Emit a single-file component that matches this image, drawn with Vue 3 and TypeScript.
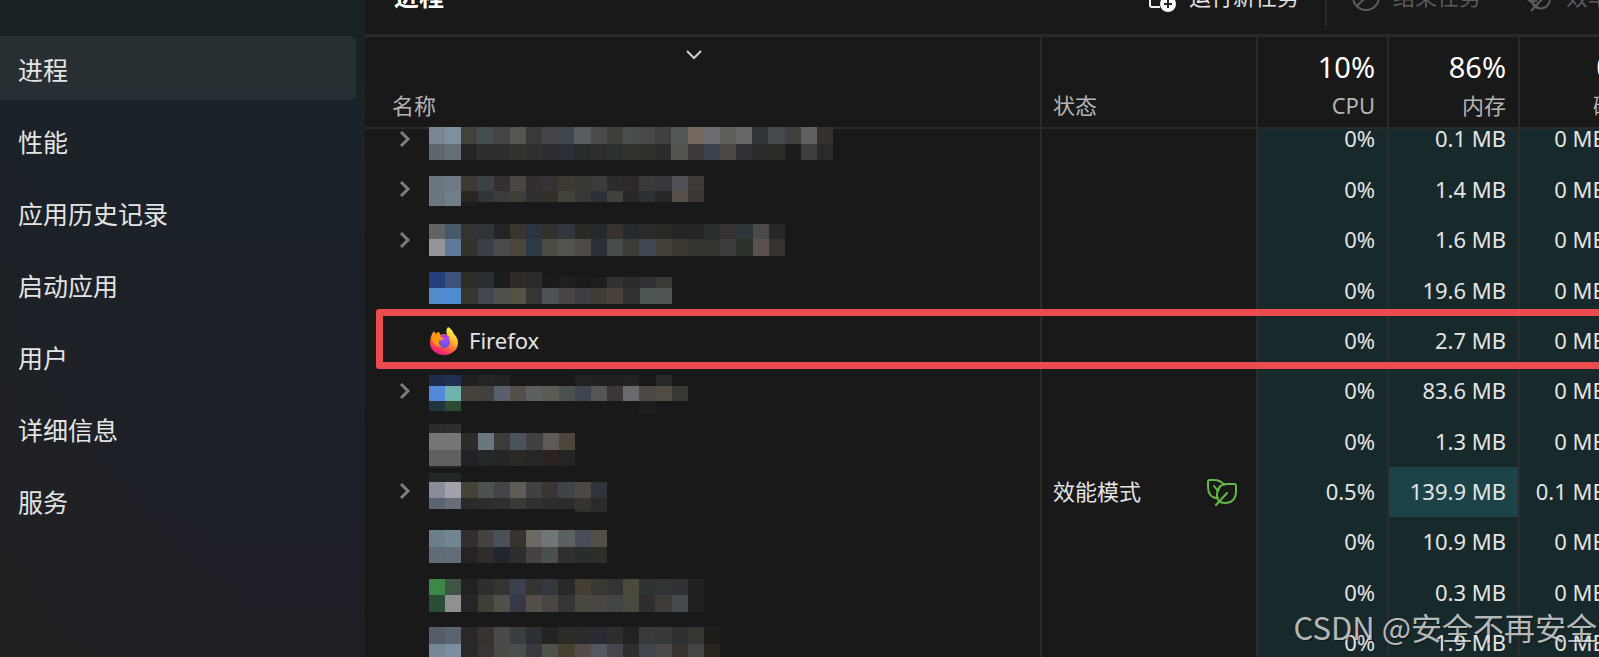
<script setup lang="ts">
interface Tile {
  x: number
  y: number
  h: number
  fill: string
}

interface Process {
  name?: string
  expandable?: boolean
  efficiency?: boolean
  cpu: string
  memory: string
  disk: string
  busy?: boolean
  marked?: boolean
  columns: number
  tiles: Tile[]
}

const TILE = 97

// One horizontal strip of tiles; "-" leaves a tile empty.
function band(y: number, end: number, colors: string, start = 0): Tile[] {
  return colors
    .split(' ')
    .map((c, i) => ({ x: (start + i) * TILE, y, h: end - y, fill: c }))
    .filter((t) => t.fill !== '-')
    .map((t) => ({ ...t, fill: '#' + t.fill }))
}

const navItems: string[] = ['进程', '性能', '应用历史记录', '启动应用', '用户', '详细信息', '服务']

const processes: Process[] = [
  {
    expandable: true, cpu: '0%', memory: '0.1 MB', disk: '0 MB/秒', columns: 25,
    tiles: [
      ...band(12, 29, '7a8792 7f8f9b 44423d 454d4f 444444 57554f 3a3839 434546 3f474c 575c60 4d4b49 403f3c 4a4f4d 484846 413f41 505754 73675f 6b6c70 5e5f5b 666764 2f3437 454a4e 40413d 616162 352f2e'),
      ...band(29, 45, '60666e 666f77 262523 2d2e2f 2e2e2d 34322d 303031 2d2e30 2b3036 292c2c 2d2d2c 2b3130 33312c 31302d 2c2c2e 52544e 3e383b 3c434f 4c4743 303136 292a2c 2e2c29 1c1d1e 3f3d40 2a2a2b'),
    ],
  },
  {
    expandable: true, cpu: '0%', memory: '1.4 MB', disk: '0 MB/秒', columns: 17,
    tiles: [
      ...band(11, 26, '6b767e 6e7983 3c3935 3c4146 323130 4b4643 332f2e 353233 3d3832 383734 3c3c3f 2e2c2a 2c2928 39393b 36373a 505156 3e3b36'),
      ...band(26, 37, '6b767e 727e89 292621 30353a 3b3b3d 3f3e37 303033 352f2a 43433c 363836 2e3038 40423c 282626 2b3135 262624 57504b 3b3633'),
      ...band(37, 41, '6b767e 727e89 1e1d1b'),
    ],
  },
  {
    expandable: true, cpu: '0%', memory: '1.6 MB', disk: '0 MB/秒', columns: 22,
    tiles: [
      ...band(8, 23, '626463 485866 34332f 2f3438 242424 38342e 2b3540 33312e 33373d 2b2926 25282c 37312f 272a2d 2b2b2b 292824 242523 242625 2b2e2f 363232 2f363a 4c4a48 292725'),
      ...band(23, 40, '959595 5e7b99 33322d 3c3f45 494a49 49473c 2e3946 4b4b44 53534f 4d4945 2b3036 474b49 3c3b37 414854 434038 3a3630 34332e 33342f 3d3c3a 2d312c 5b5250 373230'),
    ],
  },
  {
    cpu: '0%', memory: '19.6 MB', disk: '0 MB/秒', columns: 15,
    tiles: [
      ...band(6, 22, '263e7c 3d5379 2d2e2a 2a2f31 1b1c1c 302b28 292a2b'),
      ...band(11, 22, '1b1b1b 202021 1b1b1b 1d1e1f 333231 2d2b2a 303136 3b3934', 7),
      ...band(22, 38, '558acb 4f8dd3 37362f 43474d 50504f 555145 353532 4d5357 4a4344 3f3e43 403e34 48423a 333233 4c5755 525354'),
    ],
  },
  { name: 'Firefox', cpu: '0%', memory: '2.7 MB', disk: '0 MB/秒', marked: true, columns: 0, tiles: [] },
  {
    expandable: true, cpu: '0%', memory: '83.6 MB', disk: '0 MB/秒', columns: 16,
    tiles: [
      ...band(8, 19, '202c4d 222f50 202020 252525 232323 - - - - 222222 212121 22211f 222321 - 282828'),
      ...band(19, 34, '5488d8 70b3ad 46413b 41413f 59606c 544f4b 5d6061 5b5a53 4c5150 3e454f 555556 3b363a 686a6e 4d4746 4f4c43 393832'),
      ...band(34, 44, '223342 2b4a2f'),
      ...band(34, 46, '1d1d1d', 13),
    ],
  },
  {
    cpu: '0%', memory: '1.3 MB', disk: '0 MB/秒', columns: 9,
    tiles: [
      ...band(7, 16, '2c2c2c 2e2e2e'),
      ...band(16, 33, '757575 757575 2c2a2b 6a777f 3c3a3b 4c525c 41423f 5e5b57 4c463d'),
      ...band(33, 49, '606060 606060 202225 242727 252525 292926 252625 2a2320 242424'),
      ...band(49, 51, '242726 242726'),
    ],
  },
  {
    expandable: true, efficiency: true, cpu: '0.5%', memory: '139.9 MB', disk: '0.1 MB/秒', busy: true, columns: 11,
    tiles: [
      ...band(6, 15, '242828 242828'),
      ...band(15, 31, '898b98 a4a1ac 454237 4b5250 434447 5e5c55 414144 3a3433 404348 4d4846 30333a'),
      ...band(31, 42, '5c6371 696d79 2a2a28 2c2d2e 2f2f31 3a3937 312f2f 2d2d2c 2b2c2b 353431 292a2a'),
      ...band(42, 45, '31302f 292a2a', 9),
    ],
  },
  {
    cpu: '0%', memory: '10.9 MB', disk: '0 MB/秒', columns: 11,
    tiles: [
      ...band(12, 29, '6d7e8b 718593 332e2d 474242 4b5058 393330 6c6965 707577 5b6060 494d59 524f46'),
      ...band(29, 45, '606b76 626d78 252422 302c2b 22252b 2e2e2d 474142 495050 302e30 2a2d2d 2e2d28'),
    ],
  },
  {
    cpu: '0%', memory: '0.3 MB', disk: '0 MB/秒', columns: 17,
    tiles: [
      ...band(11, 27, '3c8849 405445 222222 2f2e2c 353431 3a414c 343330 34373b 282827 453e33 3a3832 343331 4b483c 2f3432 303432 303135 22211f'),
      ...band(27, 44, '2a4d35 909090 262626 3f3e37 50504a 373a46 544f48 4a4545 353633 474840 494643 414644 494940 2e2e2f 3e3a38 444a4d 22211f'),
    ],
  },
  {
    cpu: '0%', memory: '1.9 MB', disk: '0 MB/秒', columns: 18,
    tiles: [
      ...band(9, 26, '555e68 5a646e 292827 383230 484a47 3a3d3f 2d3033 242321 2c2b28 292a2b 2a2b32 2e2e31 222222 393a3b 37383a 2e2f30 353532 1e1c19'),
      ...band(26, 43, '768895 7c8fa0 292827 383433 484a46 484d4e 383a40 50504b 45402f 534c48 54585f 47454c 2e2e2e 42444c 494846 38322e 434444 29241e'),
    ],
  },
]
</script>

<template>
  <div class="window">
    <nav class="sidebar">
      <button v-for="(item, i) in navItems" :key="item" type="button" class="nav-item" :class="{ active: i === 0 }">
        {{ item }}
      </button>
    </nav>

    <main class="main">
      <header class="toolbar">
        <h1>进程</h1>
        <button type="button" class="tool">
          <svg width="30" height="30" viewBox="0 0 30 30" fill="none">
            <path d="M25 10V2H3v20q0 2 2 2h8" stroke="#f0f0f0" stroke-width="2" />
            <circle cx="21" cy="21" r="8" fill="#f7f7f7" />
            <path d="M21 17v8M17 21h8" stroke="#222" stroke-width="2" />
          </svg>
          <span>运行新任务</span>
        </button>
        <i class="divider"></i>
        <button type="button" class="tool" disabled>
          <svg width="30" height="30" viewBox="0 0 30 30" fill="none" stroke="currentColor" stroke-width="2">
            <circle cx="15" cy="14" r="13" />
            <path d="M6 23 24 5" />
          </svg>
          <span>结束任务</span>
        </button>
        <button type="button" class="tool last" disabled>
          <svg width="30" height="30" viewBox="0 0 30 30" fill="none" stroke="currentColor" stroke-width="2">
            <path d="M11 24q5 3 11 0c4-3 5-8 5-16M11 24c-4-4-3-10 3-15h13" />
            <path d="M7 28 20 14M13 18Q4 19 2 13V2M2 15l14 11" />
          </svg>
          <span>效率模式</span>
        </button>
      </header>

      <table>
        <colgroup>
          <col />
          <col class="col-status" />
          <col class="col-num" />
          <col class="col-num" />
          <col class="col-num" />
        </colgroup>
        <thead>
          <tr>
            <th scope="col" class="name-head">
              <svg width="16" height="10" viewBox="0 0 16 10" fill="none" stroke="#d0d0d0" stroke-width="2">
                <path d="m1 1 7 7 7-7" />
              </svg>
              <span>名称</span>
            </th>
            <th scope="col">状态</th>
            <th scope="col" class="num"><b>10%</b>CPU</th>
            <th scope="col" class="num"><b>86%</b>内存</th>
            <th scope="col" class="num"><b>0%</b>磁盘</th>
          </tr>
        </thead>
        <tbody>
          <tr v-for="(p, i) in processes" :key="i" :class="{ marked: p.marked }">
            <td class="name">
              <div class="name-inner">
                <button v-if="p.expandable" type="button" class="expand" aria-label="展开">
                  <svg width="12" height="18" viewBox="0 0 12 18" fill="none" stroke="#7c7c7c" stroke-width="3">
                    <path d="m2 1 7 7-7 7" />
                  </svg>
                </button>
                <span v-else class="expand"></span>
                <svg
                  v-if="p.columns"
                  class="mosaic"
                  :width="Math.round((p.columns * TILE) / 6)"
                  height="50"
                  :viewBox="`0 0 ${p.columns * TILE} 50`"
                  preserveAspectRatio="none"
                  shape-rendering="crispEdges"
                >
                  <rect v-for="(t, k) in p.tiles" :key="k" :x="t.x" :y="t.y" :width="TILE" :height="t.h" :fill="t.fill" />
                </svg>
                <template v-else>
                  <svg class="firefox" width="30" height="30" viewBox="0 0 30 30">
                    <defs>
                      <linearGradient id="fx-body" x1="0.8" y1="0.1" x2="0.3" y2="1">
                        <stop offset="0" stop-color="#fff044" />
                        <stop offset="0.35" stop-color="#ffb52e" />
                        <stop offset="0.65" stop-color="#ff5a3c" />
                        <stop offset="1" stop-color="#e8128c" />
                      </linearGradient>
                      <radialGradient id="fx-globe" cx="0.6" cy="0.2" r="0.9">
                        <stop offset="0" stop-color="#a84bff" />
                        <stop offset="1" stop-color="#5b4fd6" />
                      </radialGradient>
                    </defs>
                    <path d="M19 1c4 2 5 5 6 7 3 3 4 6 4 9a14 12 0 0 1-28 0c0-5 1-8 4-12l1 3 4-2 1 3c3-1 5-1 7 0-1-3-1-6 1-8z" fill="url(#fx-body)" />
                    <circle cx="15" cy="16" r="6" fill="url(#fx-globe)" />
                    <path d="M5 5l1 3 4-2 1 4 4 2c0 2-3 2-5 3-1 3 1 5 4 5-5 2-10-1-11-7z" fill="#ff980e" />
                    <path d="M11 10c3-2 8-2 10 2-2-1-3-1-4 0-2 0-4 0-6-2z" fill="#b833e1" />
                  </svg>
                  <span class="label">{{ p.name }}</span>
                </template>
              </div>
              <i v-if="p.marked" class="frame"></i>
            </td>
            <td>
              <div v-if="p.efficiency" class="status">
                <span class="label">效能模式</span>
                <svg width="32" height="28" viewBox="0 0 32 28" fill="none" stroke="#62ba46" stroke-width="2" stroke-linejoin="round" stroke-linecap="round">
                  <path d="M12 20C5 20 2 15 2 9V4q0-2 2-2h4c5 0 8 2 10 5" />
                  <path d="M8 8l4 5 2-5" />
                  <path d="M12 22c-3-8 1-16 9-16h7q2 0 2 2v5c0 10-7 14-16 11" />
                  <path d="M10 27 21 15" />
                </svg>
              </div>
            </td>
            <td class="num heat">{{ p.cpu }}</td>
            <td class="num heat" :class="{ busy: p.busy }">{{ p.memory }}</td>
            <td class="num heat">{{ p.disk }}</td>
          </tr>
        </tbody>
      </table>
    </main>

    <div class="watermark">CSDN @安全不再安全</div>
  </div>
</template>

<style>
body {
  margin: 0;
  background: #191919;
}
</style>

<style scoped>
.window {
  position: relative;
  display: flex;
  height: 100vh;
  overflow: hidden;
  color: #e4e4e4;
  background: #191919;
  font: 22px/22px "Noto Sans", "Noto Sans CJK SC", sans-serif;
}

button {
  padding: 0;
  border: 0;
  background: none;
  color: inherit;
  font: inherit;
}

.sidebar {
  display: flex;
  flex: none;
  flex-direction: column;
  gap: 8px;
  box-sizing: border-box;
  width: 365px;
  padding: 36px 9px 0 0;
  background:
    linear-gradient(to top right, #202122, rgba(32, 33, 34, 0) 40%),
    linear-gradient(to bottom, #1b2224, #1b2228 15%, #1d2028 70%, #201f26);
}

.nav-item {
  height: 64px;
  padding: 3px 0 0 18px;
  border-radius: 0 7px 7px 0;
  text-align: left;
  font-size: 25px;
}

.nav-item.active {
  background: rgba(255, 255, 255, 0.06);
}

.main {
  flex: 1;
  min-width: 0;
  overflow: hidden;
}

.toolbar {
  display: flex;
  align-items: flex-end;
  box-sizing: border-box;
  height: 37px;
  padding: 0 0 8px 29px;
  border-bottom: 3px solid #2a2a2a;
}

h1 {
  flex: 1;
  margin: 0;
  padding-bottom: 17px;
  color: #fff;
  font-size: 25px;
  line-height: 26px;
  font-weight: 600;
}

.tool {
  display: flex;
  flex: none;
  align-items: flex-end;
  gap: 12px;
  padding-bottom: 13px;
}

.tool span {
  padding-bottom: 6px;
}

.tool:disabled {
  color: #5c5c5c;
}

.tool.last {
  margin: 0 -55px 0 43px;
}

.divider {
  flex: none;
  width: 2px;
  height: 40px;
  margin: 0 24px 0 26px;
  background: #2b2b2b;
}

table {
  width: calc(100% + 52px);
  border-spacing: 0;
  table-layout: fixed;
}

.col-status {
  width: 216px;
}

.col-num {
  width: 131px;
}

th,
td {
  box-sizing: border-box;
  border-right: 2px solid #2b2b2b;
}

th {
  height: 92px;
  padding: 0 11px 11px;
  border-bottom: 2px solid #2b2b2b;
  color: #b4b4b4;
  font-weight: 400;
  text-align: left;
  vertical-align: bottom;
}

th b {
  display: block;
  margin-bottom: 12px;
  color: #fff;
  font-size: 29px;
  line-height: 30px;
  font-weight: 400;
}

.name-head {
  padding-right: 45px;
  padding-left: 27px;
}

.name-head svg {
  display: block;
  margin: 0 auto 34px;
}

.name-head span {
  display: block;
}

td {
  height: 50px;
  padding: 0 11px;
}

tr:nth-child(3n) td {
  height: 51px;
}

.heat {
  padding-bottom: 3px;
  background: #18292c;
}

tr:first-child td {
  height: 36px;
  padding-bottom: 14px;
}

tr:first-child td.heat {
  padding-bottom: 17px;
  line-height: 19px;
}

.num {
  padding-right: 12px;
  text-align: right;
}

.busy {
  background: #1c4448;
}

td.name {
  padding-left: 34px;
}

.name-inner {
  display: flex;
  align-items: center;
  height: 22px;
}

.expand {
  display: flex;
  flex: none;
  width: 30px;
}

.mosaic {
  flex: none;
  overflow: visible;
}

.firefox {
  margin-right: 10px;
}

.label {
  padding-bottom: 3px;
}

.status {
  display: flex;
  align-items: center;
  justify-content: space-between;
  height: 22px;
  padding-right: 7px;
}

.marked {
  position: relative;
}

.frame {
  position: absolute;
  top: -7px;
  right: -8px;
  bottom: -3px;
  left: 11px;
  border: 7px solid #ec4b4f;
  border-radius: 3px;
}

.watermark {
  position: absolute;
  right: 2px;
  bottom: 15px;
  color: rgba(255, 255, 255, 0.7);
  font: 31px/30px "Noto Sans CJK SC", sans-serif;
  text-shadow: 1px 1px 1px rgba(0, 0, 0, 0.5);
}
</style>
